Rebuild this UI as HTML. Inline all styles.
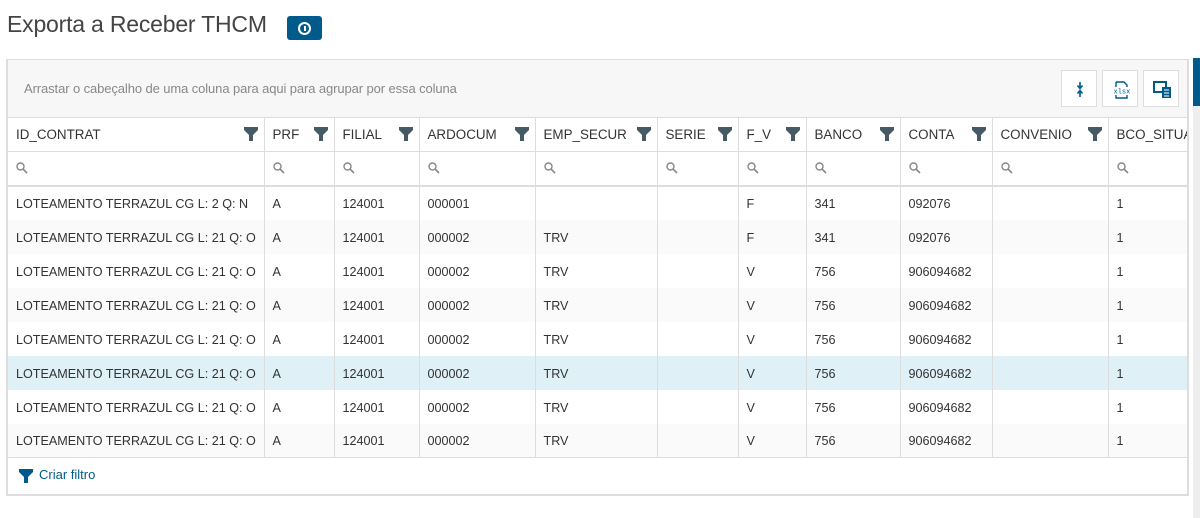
<!DOCTYPE html>
<html><head><style>
*{box-sizing:border-box;margin:0;padding:0}
body{width:1200px;height:518px;background:#fff;font-family:"Liberation Sans",sans-serif;color:#333;position:relative;overflow:hidden}
h1{position:absolute;left:7px;top:11px;font-weight:normal;font-size:23px;color:#444;letter-spacing:-0.2px}
.info{position:absolute;left:287px;top:16px;width:35px;height:24px;background:#005a8c;border-radius:3px}
.info:after{content:"";position:absolute;left:11px;top:6px;width:9px;height:9px;border:2px solid #fff;border-radius:50%}
.info:before{content:"";position:absolute;left:17px;top:10px;width:2px;height:5px;background:#fff;z-index:2}
.box{position:absolute;left:6px;top:59px;width:1183px;height:437px;border:2px solid #ddd;border-top:1px solid #ddd;background:#fff;overflow:hidden}
.tb{height:57px;background:#f7f7f7;position:relative}
.tb span{position:absolute;left:16px;top:21px;font-size:13px;color:#888;letter-spacing:-0.1px}
.btn{position:absolute;top:10px;width:36px;height:37px;border:1px solid #ddd;background:#fff}
table{border-collapse:collapse;table-layout:fixed;width:1181px;font-size:12.6px}
td,th{border-left:1px solid #ddd;height:34px;padding:2px 8px 0;white-space:nowrap;overflow:hidden;text-align:left}
td:first-child,th:first-child{border-left:none}
th{font-weight:normal;font-size:13.4px;position:relative;border-top:1px solid #ddd;border-bottom:1px solid #ddd;padding-top:0}
th svg.f{position:absolute;right:6px;top:9px}
tr.flt td{border-bottom:2px solid #ddd;height:34px}
tr.alt td{background:#fafafa}
tr.sel td{background:#dff0f7}
tr.last td{border-bottom:1px solid #ddd}
.foot{position:absolute;left:0;top:397px;width:100%;height:38px}
.foot span{position:absolute;left:31px;top:10px;font-size:13px;color:#005a8c}
.sb{position:absolute;left:1193px;top:58px;width:7px;height:460px;background:#eee}
.sb div{height:48px;background:#005a8c}
</style></head><body>
<h1>Exporta a Receber THCM</h1>
<div class="info"></div>
<div class="sb"><div></div></div>
<div class="box">
<div class="tb"><span>Arrastar o cabeçalho de uma coluna para aqui para agrupar por essa coluna</span>
<div class="btn" style="left:1053px"><svg width="36" height="37"><path d="M18 11v6M15.5 14.5l2.5 3 2.5-3M18 26v-6M15.5 22.5l2.5-3 2.5 3" stroke="#005a8c" stroke-width="1.6" fill="none"/></svg></div>
<div class="btn" style="left:1094px"><svg width="36" height="37"><path d="M13 11h8l3 3v2M13 11v5M13 24v3h11v-3" stroke="#005a8c" stroke-width="1.4" fill="none"/><text x="10.5" y="22.5" font-size="7" fill="#005a8c" font-family="Liberation Mono">xlsx</text></svg></div>
<div class="btn" style="left:1135px"><svg width="36" height="37"><rect x="10" y="11" width="12" height="10" stroke="#005a8c" stroke-width="2" fill="none"/><rect x="18" y="16" width="9" height="11" fill="#005a8c"/><path d="M20 19h5M20 22h5M20 25h5" stroke="#fff" stroke-width="1"/></svg></div>
</div>
<table>
<colgroup><col style="width:256px"><col style="width:70px"><col style="width:85px"><col style="width:116px"><col style="width:122px"><col style="width:81px"><col style="width:68px"><col style="width:94px"><col style="width:92px"><col style="width:116px"><col style="width:81px"></colgroup>
<tr>
<th>ID_CONTRAT<svg class="f" width="14" height="14"><path d="M0 0h14v3l-5 5v6h-4v-6l-5-5z" fill="#455a64"/></svg></th>
<th>PRF<svg class="f" width="14" height="14"><path d="M0 0h14v3l-5 5v6h-4v-6l-5-5z" fill="#455a64"/></svg></th>
<th>FILIAL<svg class="f" width="14" height="14"><path d="M0 0h14v3l-5 5v6h-4v-6l-5-5z" fill="#455a64"/></svg></th>
<th>ARDOCUM<svg class="f" width="14" height="14"><path d="M0 0h14v3l-5 5v6h-4v-6l-5-5z" fill="#455a64"/></svg></th>
<th>EMP_SECUR<svg class="f" width="14" height="14"><path d="M0 0h14v3l-5 5v6h-4v-6l-5-5z" fill="#455a64"/></svg></th>
<th>SERIE<svg class="f" width="14" height="14"><path d="M0 0h14v3l-5 5v6h-4v-6l-5-5z" fill="#455a64"/></svg></th>
<th>F_V<svg class="f" width="14" height="14"><path d="M0 0h14v3l-5 5v6h-4v-6l-5-5z" fill="#455a64"/></svg></th>
<th>BANCO<svg class="f" width="14" height="14"><path d="M0 0h14v3l-5 5v6h-4v-6l-5-5z" fill="#455a64"/></svg></th>
<th>CONTA<svg class="f" width="14" height="14"><path d="M0 0h14v3l-5 5v6h-4v-6l-5-5z" fill="#455a64"/></svg></th>
<th>CONVENIO<svg class="f" width="14" height="14"><path d="M0 0h14v3l-5 5v6h-4v-6l-5-5z" fill="#455a64"/></svg></th>
<th>BCO_SITUA</th>
</tr>
<tr class="flt">
<td><svg width="12" height="12"><circle cx="4.5" cy="4.5" r="3.5" stroke="#888" stroke-width="1.4" fill="none"/><path d="M7 7l4 4" stroke="#888" stroke-width="1.6"/></svg></td>
<td><svg width="12" height="12"><circle cx="4.5" cy="4.5" r="3.5" stroke="#888" stroke-width="1.4" fill="none"/><path d="M7 7l4 4" stroke="#888" stroke-width="1.6"/></svg></td>
<td><svg width="12" height="12"><circle cx="4.5" cy="4.5" r="3.5" stroke="#888" stroke-width="1.4" fill="none"/><path d="M7 7l4 4" stroke="#888" stroke-width="1.6"/></svg></td>
<td><svg width="12" height="12"><circle cx="4.5" cy="4.5" r="3.5" stroke="#888" stroke-width="1.4" fill="none"/><path d="M7 7l4 4" stroke="#888" stroke-width="1.6"/></svg></td>
<td><svg width="12" height="12"><circle cx="4.5" cy="4.5" r="3.5" stroke="#888" stroke-width="1.4" fill="none"/><path d="M7 7l4 4" stroke="#888" stroke-width="1.6"/></svg></td>
<td><svg width="12" height="12"><circle cx="4.5" cy="4.5" r="3.5" stroke="#888" stroke-width="1.4" fill="none"/><path d="M7 7l4 4" stroke="#888" stroke-width="1.6"/></svg></td>
<td><svg width="12" height="12"><circle cx="4.5" cy="4.5" r="3.5" stroke="#888" stroke-width="1.4" fill="none"/><path d="M7 7l4 4" stroke="#888" stroke-width="1.6"/></svg></td>
<td><svg width="12" height="12"><circle cx="4.5" cy="4.5" r="3.5" stroke="#888" stroke-width="1.4" fill="none"/><path d="M7 7l4 4" stroke="#888" stroke-width="1.6"/></svg></td>
<td><svg width="12" height="12"><circle cx="4.5" cy="4.5" r="3.5" stroke="#888" stroke-width="1.4" fill="none"/><path d="M7 7l4 4" stroke="#888" stroke-width="1.6"/></svg></td>
<td><svg width="12" height="12"><circle cx="4.5" cy="4.5" r="3.5" stroke="#888" stroke-width="1.4" fill="none"/><path d="M7 7l4 4" stroke="#888" stroke-width="1.6"/></svg></td>
<td><svg width="12" height="12"><circle cx="4.5" cy="4.5" r="3.5" stroke="#888" stroke-width="1.4" fill="none"/><path d="M7 7l4 4" stroke="#888" stroke-width="1.6"/></svg></td>
</tr>
<tr><td>LOTEAMENTO TERRAZUL CG L: 2 Q: N</td><td>A</td><td>124001</td><td>000001</td><td></td><td></td><td>F</td><td>341</td><td>092076</td><td></td><td>1</td></tr>
<tr class="alt"><td>LOTEAMENTO TERRAZUL CG L: 21 Q: O</td><td>A</td><td>124001</td><td>000002</td><td>TRV</td><td></td><td>F</td><td>341</td><td>092076</td><td></td><td>1</td></tr>
<tr><td>LOTEAMENTO TERRAZUL CG L: 21 Q: O</td><td>A</td><td>124001</td><td>000002</td><td>TRV</td><td></td><td>V</td><td>756</td><td>906094682</td><td></td><td>1</td></tr>
<tr class="alt"><td>LOTEAMENTO TERRAZUL CG L: 21 Q: O</td><td>A</td><td>124001</td><td>000002</td><td>TRV</td><td></td><td>V</td><td>756</td><td>906094682</td><td></td><td>1</td></tr>
<tr><td>LOTEAMENTO TERRAZUL CG L: 21 Q: O</td><td>A</td><td>124001</td><td>000002</td><td>TRV</td><td></td><td>V</td><td>756</td><td>906094682</td><td></td><td>1</td></tr>
<tr class="sel"><td>LOTEAMENTO TERRAZUL CG L: 21 Q: O</td><td>A</td><td>124001</td><td>000002</td><td>TRV</td><td></td><td>V</td><td>756</td><td>906094682</td><td></td><td>1</td></tr>
<tr><td>LOTEAMENTO TERRAZUL CG L: 21 Q: O</td><td>A</td><td>124001</td><td>000002</td><td>TRV</td><td></td><td>V</td><td>756</td><td>906094682</td><td></td><td>1</td></tr>
<tr class="alt last"><td>LOTEAMENTO TERRAZUL CG L: 21 Q: O</td><td>A</td><td>124001</td><td>000002</td><td>TRV</td><td></td><td>V</td><td>756</td><td>906094682</td><td></td><td>1</td></tr>
</table>
<div class="foot"><svg style="position:absolute;left:11px;top:12px" width="14" height="14"><path d="M0 0h14v3l-5 5v6h-4v-6l-5-5z" fill="#005a8c"/></svg><span>Criar filtro</span></div>
</div>
</body></html>
